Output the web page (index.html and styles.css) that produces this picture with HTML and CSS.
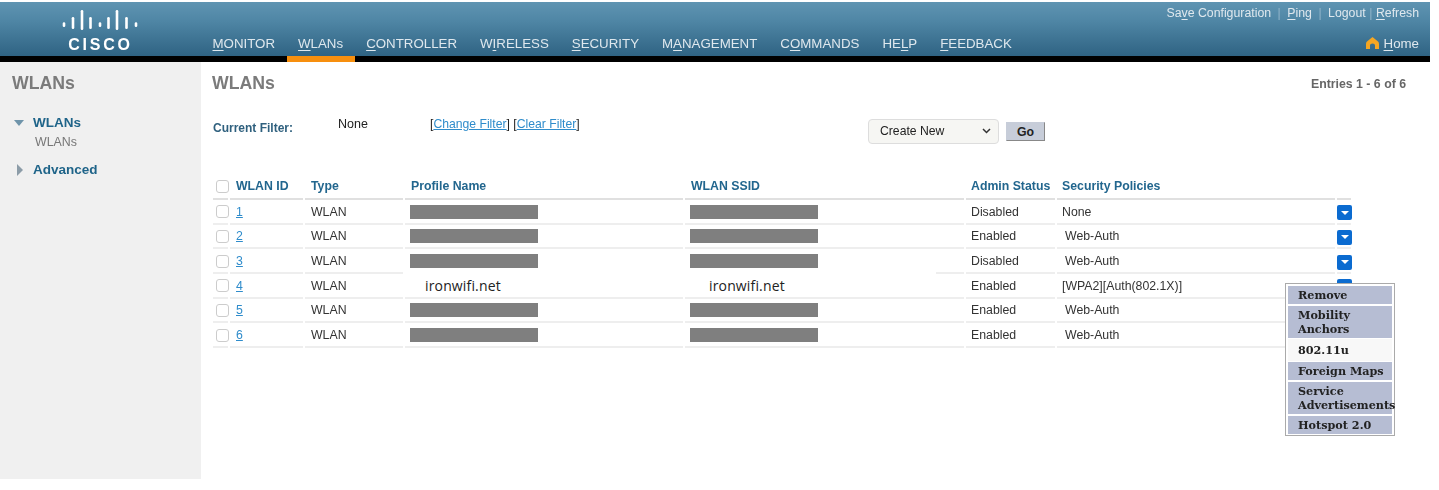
FILE: index.html

```html
<!DOCTYPE html>
<html lang="en">
<head>
  <meta charset="UTF-8">
  <title>WLANs</title>
  <link rel="stylesheet" href="styles.css">
</head>
<body>

<!-- top bar -->
<header class="topbar">
  <div class="logo">
    <svg class="logo-bars" width="78" height="22" viewBox="0 0 78 22">
      <g stroke="#fff" stroke-width="2.6" stroke-linecap="round">
        <line x1="2" y1="14.5" x2="2" y2="16.7"/>
        <line x1="11" y1="9.3" x2="11" y2="18.7"/>
        <line x1="20" y1="2.3" x2="20" y2="19.7"/>
        <line x1="28.5" y1="9.3" x2="28.5" y2="18.7"/>
        <line x1="38" y1="14.5" x2="38" y2="16.7"/>
        <line x1="46.5" y1="9.3" x2="46.5" y2="18.7"/>
        <line x1="55" y1="2.3" x2="55" y2="19.7"/>
        <line x1="64.5" y1="9.3" x2="64.5" y2="18.7"/>
        <line x1="74" y1="14.5" x2="74" y2="16.7"/>
      </g>
    </svg>
    <div class="logo-text">CISCO</div>
  </div>
  <div class="topbar-right">
    <div class="toplinks">
      <span>Sa<u>v</u>e Configuration</span><i>|</i>
      <span><u>P</u>ing</span><i>|</i>
      <span>Logout</span><i class="tight">|</i>
      <span><u>R</u>efresh</span>
    </div>
    <div class="navrow">
      <nav class="nav">
        <a><u>M</u>ONITOR</a>
        <a class="current"><u>W</u>LANs</a>
        <a><u>C</u>ONTROLLER</a>
        <a>W<u>I</u>RELESS</a>
        <a><u>S</u>ECURITY</a>
        <a>M<u>A</u>NAGEMENT</a>
        <a>C<u>O</u>MMANDS</a>
        <a>HE<u>L</u>P</a>
        <a><u>F</u>EEDBACK</a>
      </nav>
      <a class="home">
        <svg width="13" height="12" viewBox="0 0 13 12"><path d="M6.5 0L12 4.6C12.7 5.2 13 6 13 7V12H9V8.4C9 7.2 7.9 6.4 6.5 6.4S4 7.2 4 8.4V12H0V7C0 6 0.3 5.2 1 4.6Z" fill="#f5a623"/></svg>
        <span><u>H</u>ome</span>
      </a>
    </div>
  </div>
</header>

<div class="content">

  <!-- left menu -->
  <aside class="sidebar">
    <h2>WLANs</h2>
    <div class="side-item side-open">
      <span class="arrow-down"></span>
      <b>WLANs</b>
    </div>
    <div class="side-sub">WLANs</div>
    <div class="side-item side-adv">
      <span class="arrow-right"></span>
      <b>Advanced</b>
    </div>
  </aside>

  <main class="main">
    <div class="title-row">
      <h2>WLANs</h2>
      <span class="entries">Entries 1 - 6 of 6</span>
    </div>

    <div class="filter-row">
      <span class="filter-label">Current Filter:</span>
      <span class="filter-value">None</span>
      <span class="filter-links">[<a>Change Filter</a>] [<a>Clear Filter</a>]</span>
      <div class="select">
        <span>Create New</span>
        <svg width="9" height="6" viewBox="0 0 9 6"><path d="M1 1L4.5 4.5L8 1" fill="none" stroke="#333" stroke-width="1.5"/></svg>
      </div>
      <button class="go">Go</button>
    </div>

    <table class="wlans">
      <colgroup>
        <col class="c-check"><col class="c-id"><col class="c-type"><col class="c-name"><col class="c-name2">
        <col class="c-admin"><col class="c-sec"><col class="c-act">
      </colgroup>
      <thead>
        <tr>
          <th><input type="checkbox"></th>
          <th>WLAN ID</th>
          <th>Type</th>
          <th>Profile Name</th>
          <th>WLAN SSID</th>
          <th>Admin Status</th>
          <th>Security Policies</th>
          <th></th>
        </tr>
      </thead>
      <tbody>
        <tr>
          <td><input type="checkbox"></td>
          <td><a>1</a></td>
          <td>WLAN</td>
          <td><div class="hidden-name"></div></td>
          <td><div class="hidden-name"></div></td>
          <td>Disabled</td>
          <td>None</td>
          <td><span class="drop"></span></td>
        </tr>
        <tr>
          <td><input type="checkbox"></td>
          <td><a>2</a></td>
          <td>WLAN</td>
          <td><div class="hidden-name"></div></td>
          <td><div class="hidden-name"></div></td>
          <td>Enabled</td>
          <td class="web-auth">Web-Auth</td>
          <td><span class="drop"></span></td>
        </tr>
        <tr>
          <td><input type="checkbox"></td>
          <td><a>3</a></td>
          <td>WLAN</td>
          <td class="no-line"><div class="hidden-name"></div></td>
          <td class="part-line"><div class="hidden-name"></div></td>
          <td>Disabled</td>
          <td class="web-auth">Web-Auth</td>
          <td><span class="drop"></span></td>
        </tr>
        <tr>
          <td><input type="checkbox"></td>
          <td><a>4</a></td>
          <td>WLAN</td>
          <td class="plain-name name-a">ironwifi.net</td>
          <td class="plain-name name-b">ironwifi.net</td>
          <td>Enabled</td>
          <td>[WPA2][Auth(802.1X)]</td>
          <td><span class="drop"></span></td>
        </tr>
        <tr>
          <td><input type="checkbox"></td>
          <td><a>5</a></td>
          <td>WLAN</td>
          <td><div class="hidden-name"></div></td>
          <td><div class="hidden-name"></div></td>
          <td>Enabled</td>
          <td class="web-auth">Web-Auth</td>
          <td><span class="drop"></span></td>
        </tr>
        <tr>
          <td><input type="checkbox"></td>
          <td><a>6</a></td>
          <td>WLAN</td>
          <td><div class="hidden-name"></div></td>
          <td><div class="hidden-name"></div></td>
          <td>Enabled</td>
          <td class="web-auth">Web-Auth</td>
          <td><span class="drop"></span></td>
        </tr>
      </tbody>
    </table>

    <!-- popup menu of row 4 -->
    <div class="popup">
      <div class="popup-item">Remove</div>
      <div class="popup-item">Mobility Anchors</div>
      <div class="popup-item popup-hover">802.11u</div>
      <div class="popup-item">Foreign Maps</div>
      <div class="popup-item">Service Advertisements</div>
      <div class="popup-item">Hotspot 2.0</div>
    </div>
  </main>
</div>

</body>
</html>
```

FILE: styles.css

```css
body {
  margin: 0;
  padding-top: 2px;
  background: #fff;
  color: #333;
  font-family: "Liberation Sans", Arial, sans-serif;
  font-size: 12px;
  height: 488px;
  overflow: hidden;
}
h2 {
  margin: 0;
  font-size: 17.7px;
  line-height: 22px;
  color: #7b7b7b;
}
u {
  text-underline-offset: 2px;
}

/* the source picture is a soft capture */
.topbar, .sidebar, .title-row, .filter-row, .popup,
.wlans th, .wlans td:not(.plain-name) {
  filter: blur(0.4px);
}

/* top bar */
.topbar {
  display: flex;
  width: 1430px;
  height: 54px;
  border-bottom: 6px solid #000;
  background: linear-gradient(#5f94b2, #4f86a5 35%, #2f6383);
  color: #dfe8ee;
}
.logo {
  width: 201px;
  padding-top: 7px;
  box-sizing: border-box;
  text-align: center;
}
.logo-bars {
  display: block;
  margin-left: 62px;
}
.logo-text {
  margin-top: 5px;
  font-size: 16px;
  line-height: 18px;
  font-weight: bold;
  letter-spacing: 2.8px;
  color: #fff;
}
.topbar-right {
  flex: 1;
  display: flex;
  flex-direction: column;
  justify-content: space-between;
}
.toplinks {
  display: flex;
  justify-content: flex-end;
  padding: 4px 11px 0 0;
  font-size: 12.3px;
  line-height: 14px;
}
.toplinks i {
  font-style: normal;
  color: #8fb3c8;
  margin: 0 6.5px;
}
.toplinks i.tight {
  margin: 0 3.5px;
}
.navrow {
  display: flex;
  justify-content: space-between;
}
.nav {
  display: flex;
}
.nav a {
  padding: 0 11.5px;
  height: 20px;
  margin-bottom: -6px;
  border-bottom: 6px solid transparent;
  font-size: 13.3px;
  line-height: 16px;
}
.nav a.current {
  border-bottom-color: #f78f0e;
}
.home {
  display: flex;
  align-items: flex-start;
  gap: 5px;
  padding-right: 11px;
  font-size: 13.3px;
  line-height: 16px;
}
.home svg {
  margin-top: 1px;
}

/* sidebar + main */
.content {
  display: flex;
  position: relative;
  width: 1439px;
}
.sidebar {
  width: 201px;
  height: 417px;
  padding: 10px 0 0 12px;
  box-sizing: border-box;
  background: #f0f0f0;
}
.side-item {
  display: flex;
  align-items: center;
  font-size: 13.5px;
  line-height: 16px;
  color: #1f6489;
}
.side-open {
  margin: 21px 0 0 2px;
}
.side-adv {
  margin: 12px 0 0 5px;
}
.arrow-down {
  width: 0;
  height: 0;
  margin-right: 9px;
  border-left: 5.5px solid transparent;
  border-right: 5.5px solid transparent;
  border-top: 6px solid #6f94aa;
}
.arrow-right {
  width: 0;
  height: 0;
  margin-right: 10px;
  border-top: 6.5px solid transparent;
  border-bottom: 6.5px solid transparent;
  border-left: 6px solid #8c9ca8;
}
.side-sub {
  margin: 3px 0 0 23px;
  font-size: 12.4px;
  line-height: 16px;
  color: #777;
}
.main {
  flex: 1;
  padding: 10px 0 0 10px;
}
.title-row {
  display: flex;
  justify-content: space-between;
  align-items: center;
  padding: 0 23px 0 1px;
  width: 1194px;
}
.entries {
  padding-top: 1px;
  font-size: 12.3px;
  font-weight: bold;
  color: #666;
}

/* filter */
.filter-row {
  display: flex;
  margin: 25px 0 0 2px;
  height: 25px;
  line-height: 16px;
}
.filter-label {
  width: 125px;
  margin-top: 1px;
  font-weight: bold;
  color: #2f607e;
}
.filter-value {
  width: 92px;
  font-size: 12.5px;
  color: #222;
  margin-top: -3px;
}
.filter-links {
  width: 438px;
  font-size: 12.2px;
  color: #222;
  margin-top: -3px;
}
.filter-links a {
  color: #2f8ccb;
  text-decoration: underline;
}
.select {
  display: flex;
  align-items: center;
  justify-content: space-between;
  width: 131px;
  height: 25px;
  padding: 0 7px 2px 11px;
  box-sizing: border-box;
  background: #f6f6f3;
  border: 1px solid #ddd;
  border-radius: 4px;
  font-size: 12.2px;
  color: #222;
}
.go {
  width: 39px;
  height: 19px;
  margin: 3px 0 0 7px;
  padding: 0;
  background: #c7cdd9;
  border: 1px solid #c7cdd9;
  border-right-color: #888;
  border-bottom-color: #888;
  font-family: inherit;
  font-size: 12.3px;
  font-weight: bold;
  color: #222;
}

/* table */
.wlans {
  table-layout: fixed;
  width: 1142px;
  margin: 26px 0 0 0;
  border-collapse: separate;
  border-spacing: 2px 0;
}
.c-check { width: 15px; }
.c-id { width: 73px; }
.c-type { width: 98px; }
.c-name { width: 278px; }
.c-name2 { width: 279px; }
.c-admin { width: 89px; }
.c-sec { width: 278px; }
.c-act { width: 14px; }
.wlans th {
  height: 30px;
  padding: 4px 0 0 6px;
  box-sizing: border-box;
  border-bottom: 2px solid #e0e0e0;
  text-align: left;
  font-size: 12.3px;
  color: #22668e;
}
.wlans td {
  height: 24.67px;
  padding: 1px 0 0 6px;
  box-sizing: border-box;
  border-bottom: 2px solid #eee;
  font-size: 12.3px;
  color: #333;
}
.wlans th:nth-child(1),
.wlans td:nth-child(1) {
  padding-left: 3px;
}
.wlans th:nth-child(6), .wlans td:nth-child(6),
.wlans th:nth-child(7), .wlans td:nth-child(7) {
  padding-left: 5px;
}
.wlans th:last-child,
.wlans td:last-child {
  padding-left: 0;
}
.wlans input {
  appearance: none;
  display: block;
  width: 13px;
  height: 13px;
  margin: 0;
  background: #fff;
  border: 1px solid #ccc;
  border-radius: 3px;
}
.wlans a {
  color: #2f8ccb;
  text-decoration: underline;
}
.web-auth {
  text-indent: 3px;
}
.hidden-name {
  width: 128px;
  height: 14px;
  margin-left: -1px;
  background: #7f7f7f;
}
.wlans .no-line {
  border-bottom-color: transparent;
}
.wlans .part-line {
  border-bottom-color: transparent;
  background: linear-gradient(#eee, #eee) right bottom / 28px 2px no-repeat;
  background-origin: border-box;
}
.wlans .plain-name {
  font-family: "Open Sans", sans-serif;
  font-size: 14px;
  letter-spacing: 0.15px;
  color: #222;
}
.wlans .name-a {
  padding-left: 20px;
}
.wlans .name-b {
  padding-left: 24px;
}
.drop {
  display: flex;
  align-items: center;
  justify-content: center;
  width: 15px;
  height: 15px;
  margin-top: 2px;
  background: #0b6bd0;
  border-radius: 2px;
}
.drop::after {
  content: "";
  border-left: 4px solid transparent;
  border-right: 4px solid transparent;
  border-top: 4px solid #fff;
}

/* row menu, sits over the table */
.popup {
  position: absolute;
  left: 1285px;
  top: 221px;
  width: 110px;
  height: 153px;
  padding: 2px;
  box-sizing: border-box;
  background: #fff;
  border: 1px solid #aaa;
  font-family: "DejaVu Serif", serif;
  font-size: 11.2px;
  font-weight: bold;
  line-height: 14px;
  color: #222;
}
.popup-item {
  padding: 2px 0 2px 10px;
  margin-bottom: 2px;
  width: 94px;
  background: #b6bdd3;
}
.popup-item:last-child {
  margin-bottom: 0;
}
.popup-hover {
  padding-top: 4px;
  padding-bottom: 4px;
  background: #f8f8f8;
  margin: -1px 0 1px;
}
```
